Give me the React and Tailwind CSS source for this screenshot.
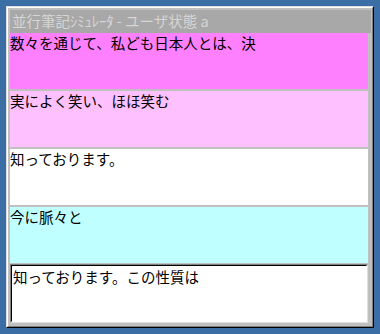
import React from "react";

const rows = [
  { text: "数々を通じて、私ども日本人とは、決", bg: "bg-[#ff80ff]" },
  { text: "実によく笑い、ほほ笑む", bg: "bg-[#ffc0ff]" },
  { text: "知っております。", bg: "bg-white" },
  { text: "今に脈々と", bg: "bg-[#c0ffff]" },
];

const font = { fontFamily: '"Noto Sans CJK JP", "Liberation Sans", sans-serif' };

export default function App() {
  return (
    <div className="w-[380px] h-[334px] bg-[#3a6ea5] pt-[6px] pl-[6px] overflow-hidden" style={font}>
      {/* window frame, classic raised border */}
      <div className="w-[368px] h-[322px] border border-t-[#dfdfdf] border-l-[#dfdfdf] border-r-black border-b-black">
        <div className="w-full h-full border border-t-white border-l-white border-r-[#808080] border-b-[#808080] bg-[#c0c0c0] p-[2px] pr-[1px] flex flex-col">
          <div className="h-[23px] bg-[#a8a8a8] text-[#d6d6d6] text-[14.5px] leading-[22px] pl-[2px] whitespace-nowrap overflow-hidden">
            並行筆記ｼﾐｭﾚｰﾀ - ユーザ状態 a
          </div>
          <div className="flex flex-col gap-[2px] mr-[3px]">
            {rows.map((r, i) => (
              <div key={i} className={`h-[56px] ${r.bg} text-black text-[14.5px] leading-[16px] pt-[2px] whitespace-nowrap overflow-hidden`}>
                {r.text}
              </div>
            ))}
          </div>
          <div className="mt-[1px] mr-[3px] h-[59px] border border-t-[#808080] border-l-[#808080] border-r-[#dfdfdf] border-b-[#dfdfdf]">
            <div className="w-full h-full border border-t-black border-l-black border-r-white border-b-white bg-white text-black text-[14.5px] leading-[16px] pt-[3px] pl-[1px] whitespace-nowrap overflow-hidden">
              知っております。この性質は
            </div>
          </div>
        </div>
      </div>
    </div>
  );
}
